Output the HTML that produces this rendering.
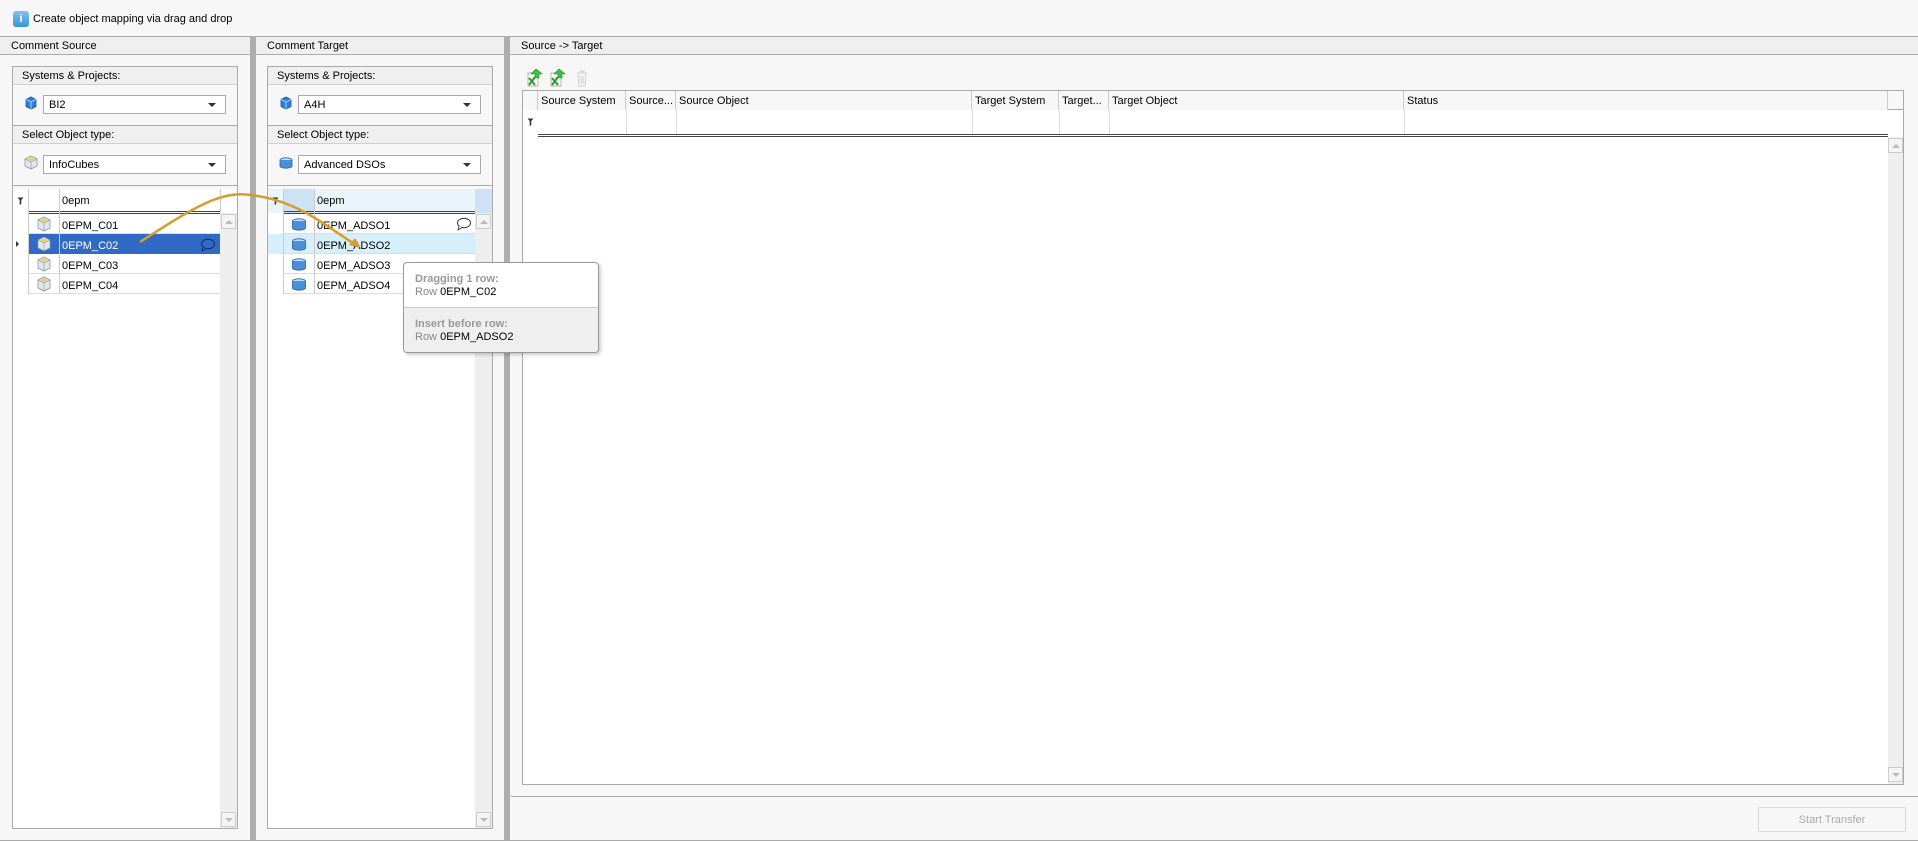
<!DOCTYPE html>
<html><head><meta charset="utf-8"><style>
*{box-sizing:border-box;margin:0;padding:0}
body{width:1918px;height:841px;background:#f7f7f7;font-family:"Liberation Sans",sans-serif;font-size:11px;color:#000;position:relative;overflow:hidden}
.a{position:absolute}
.hdr{background:#efefef;border-bottom:1px solid #aaa;height:18px;top:37px;line-height:19px;padding-left:11px}
.gut{background:#adadad;top:36px;height:805px;width:6px}
.box{border:1px solid #aaa;background:#f7f7f7}
.sub{background:#efefef;border-bottom:1px solid #d0d0d0;height:18px;line-height:19px;padding-left:9px}
.combo{background:#fff;border:1px solid #aaa;height:19px;line-height:18px;padding-left:5px}
.combo:after{content:"";position:absolute;right:9px;top:7px;border-left:4px solid transparent;border-right:4px solid transparent;border-top:4px solid #333}
.row{height:20px;line-height:20px;padding-top:2px;border-bottom:1px solid #ddd}
.sb{background:#eee}
.sbb{width:15px;height:15px;border:1px solid #ccc;background:#f4f4f4}
.up:after{content:"";position:absolute;left:3px;top:5px;border-left:4px solid transparent;border-right:4px solid transparent;border-bottom:4px solid #bbb}
.dn:after{content:"";position:absolute;left:3px;top:5px;border-left:4px solid transparent;border-right:4px solid transparent;border-top:4px solid #bbb}
.th{top:91px;height:19px;line-height:20px;border-right:1px solid #ccc;padding-left:3px;background:#f7f7f7}
</style></head><body>
<svg width="0" height="0" style="position:absolute"><defs>
<g id="fun"><path d="M0.5 0.5 H6.5 L4.3 3 V7 L2.7 8 V3Z" fill="#333"/></g>
</defs></svg>
<!-- top bar -->
<div class="a" style="left:0;top:36px;width:1918px;height:1px;background:#aaa"></div>
<div class="a" style="left:13px;top:11px;width:16px;height:16px;border-radius:3px;background:linear-gradient(#7fc2ef,#3a93d8);color:#fff;font-weight:bold;font-size:11px;text-align:center;line-height:16px">i</div>
<div class="a" style="left:33px;top:13px;font-size:11px">Create object mapping via drag and drop</div>

<!-- panel headers -->
<div class="a hdr" style="left:0;width:250px">Comment Source</div>
<div class="a hdr" style="left:256px;width:248px">Comment Target</div>
<div class="a hdr" style="left:510px;width:1408px">Source -&gt; Target</div>
<div class="a gut" style="left:250px"></div>
<div class="a gut" style="left:504px"></div>
<div class="a" style="left:0;top:840px;width:1918px;height:1px;background:#aaa"></div>

<!-- LEFT panel -->
<div class="a box" style="left:12px;top:66px;width:226px;height:763px">
 <div class="sub">Systems &amp; Projects:</div>
 <div style="height:41px;border-bottom:1px solid #aaa;position:relative">
  <svg class="a" style="left:12px;top:11px" width="12" height="14" viewBox="0 0 12 14"><path d="M6 1 L11 3.5 V10.5 L6 13 L1 10.5 V3.5Z" fill="#2f7fd6" stroke="#1a4f9a" stroke-width=".8"/><path d="M1 3.5 L6 6 L11 3.5 M6 6 V13" stroke="#9cd0ff" fill="none"/></svg>
  <div class="a combo" style="left:30px;top:10px;width:183px">BI2</div>
 </div>
 <div class="sub">Select Object type:</div>
 <div style="height:42px;border-bottom:1px solid #aaa;position:relative">
  <svg class="a" style="left:11px;top:11px" width="14" height="15" viewBox="0 0 14 15"><path d="M7 1 L13 4 V11 L7 14 L1 11 V4Z" fill="#e2e7ee" stroke="#8894a4" stroke-width=".8"/><path d="M3 4.2 L7 2.4 L11 4.2 L7 6Z" fill="#f2d04a"/><path d="M1 4 L7 7 L13 4 M7 7 V14" stroke="#8894a4" stroke-width=".6" fill="none"/></svg>
  <div class="a combo" style="left:30px;top:11px;width:183px">InfoCubes</div>
 </div>
</div>
<!-- left grid -->
<div class="a" style="left:13px;top:189px;width:224px;height:639px;background:#fff"></div>
<div class="a" style="left:28px;top:189px;width:192px;height:25px;background:#fff;border-bottom:3px double #444"></div>
<div class="a" style="left:28px;top:189px;width:1px;height:105px;background:#ccc"></div>
<div class="a" style="left:59px;top:189px;width:1px;height:105px;background:#ccc"></div>
<div class="a" style="left:62px;top:195px">0epm</div>
<svg class="a" style="left:17px;top:197px" width="8" height="9"><use href="#fun"/></svg>
<div class="a sb" style="left:220px;top:213px;width:17px;height:615px"></div>
<div class="a sbb up" style="left:221px;top:214px"></div>
<div class="a sbb dn" style="left:221px;top:812px"></div>
<div class="a" style="left:220px;top:189px;width:1px;height:24px;background:#ccc"></div>

<div class="a" style="left:28px;top:214px;width:192px">
 <div class="row" style="padding-left:34px">0EPM_C01</div>
 <div class="row" style="padding-left:34px;background:#316ac5;color:#fff;border-color:#316ac5">0EPM_C02</div>
 <div class="row" style="padding-left:34px">0EPM_C03</div>
 <div class="row" style="padding-left:34px">0EPM_C04</div>
</div>
<div class="a" style="left:28px;top:234px;width:31px;height:20px;background:#316ac5"></div>
<div class="a" style="left:59px;top:214px;width:1px;height:80px;background:#ccc"></div>
<div class="a" style="left:28px;top:214px;width:1px;height:80px;background:#ccc"></div>
<div class="a" style="left:16px;top:241px;border-top:3px solid transparent;border-bottom:3px solid transparent;border-left:3px solid #333"></div>
<svg class="a" style="left:36px;top:216px" width="16" height="80">
 <g id="cube"><path d="M8 1 L14 4 V12 L8 15 L2 12 V4Z" fill="#e2e7ee" stroke="#8894a4" stroke-width=".8"/><path d="M4 4.2 L8 2.4 L12 4.2 L8 6Z" fill="#f2d04a"/><path d="M2 4 L8 7 L14 4 M8 7 V15" stroke="#8894a4" stroke-width=".6" fill="none"/></g>
 <use href="#cube" y="20"/><use href="#cube" y="40"/><use href="#cube" y="60"/>
</svg>
<svg class="a" style="left:200px;top:238px" width="16" height="14"><ellipse cx="8" cy="6" rx="6.5" ry="4.8" fill="none" stroke="#0a2a5a"/><path d="M3 9 L2 13 L6 10.5" fill="#316ac5" stroke="#0a2a5a" stroke-width=".8"/></svg>

<!-- MIDDLE panel -->
<div class="a box" style="left:267px;top:66px;width:226px;height:763px">
 <div class="sub">Systems &amp; Projects:</div>
 <div style="height:41px;border-bottom:1px solid #aaa;position:relative">
  <svg class="a" style="left:12px;top:11px" width="12" height="14" viewBox="0 0 12 14"><path d="M6 1 L11 3.5 V10.5 L6 13 L1 10.5 V3.5Z" fill="#2f7fd6" stroke="#1a4f9a" stroke-width=".8"/><path d="M1 3.5 L6 6 L11 3.5 M6 6 V13" stroke="#9cd0ff" fill="none"/></svg>
  <div class="a combo" style="left:30px;top:10px;width:183px">A4H</div>
 </div>
 <div class="sub">Select Object type:</div>
 <div style="height:42px;border-bottom:1px solid #aaa;position:relative">
  <svg class="a" style="left:11px;top:13px" width="14" height="12"><ellipse cx="7" cy="3" rx="6" ry="2.2" fill="#bfe0ff" stroke="#2a5f9e" stroke-width=".8"/><path d="M1 3 V9 A6 2.2 0 0 0 13 9 V3" fill="#4a90d9" stroke="#2a5f9e" stroke-width=".8"/></svg>
  <div class="a combo" style="left:30px;top:11px;width:183px">Advanced DSOs</div>
 </div>
</div>
<div class="a" style="left:268px;top:189px;width:224px;height:639px;background:#fff"></div>
<div class="a" style="left:268px;top:189px;width:224px;height:24px;background:#eaf4fb"></div>
<div class="a" style="left:284px;top:189px;width:30px;height:24px;background:#cde3f5"></div>
<div class="a" style="left:475px;top:189px;width:17px;height:24px;background:#cde3f5"></div>
<div class="a" style="left:284px;top:211px;width:191px;height:3px;border-top:3px double #444"></div>
<div class="a" style="left:317px;top:195px">0epm</div>
<svg class="a" style="left:272px;top:197px" width="8" height="9"><use href="#fun"/></svg>
<div class="a sb" style="left:475px;top:213px;width:17px;height:615px"></div>
<div class="a sbb up" style="left:476px;top:214px"></div>
<div class="a sbb dn" style="left:476px;top:812px"></div>
<div class="a" style="left:268px;top:234px;width:207px;height:20px;background:#d6effa"></div>
<div class="a" style="left:283px;top:214px;width:192px">
 <div class="row" style="padding-left:34px">0EPM_ADSO1</div>
 <div class="row" style="padding-left:34px;background:#d6effa">0EPM_ADSO2</div>
 <div class="row" style="padding-left:34px">0EPM_ADSO3</div>
 <div class="row" style="padding-left:34px">0EPM_ADSO4</div>
</div>
<div class="a" style="left:283px;top:189px;width:1px;height:105px;background:#ccc"></div>
<div class="a" style="left:314px;top:189px;width:1px;height:105px;background:#ccc"></div>
<svg class="a" style="left:291px;top:218px" width="16" height="80">
 <g id="ds"><ellipse cx="8" cy="3" rx="6.5" ry="2.2" fill="#bfe0ff" stroke="#2a5f9e" stroke-width=".8"/><path d="M1.5 3 V10 A6.5 2.2 0 0 0 14.5 10 V3" fill="#4a90d9" stroke="#2a5f9e" stroke-width=".8"/></g>
 <use href="#ds" y="20"/><use href="#ds" y="40"/><use href="#ds" y="60"/>
</svg>
<svg class="a" style="left:456px;top:217px" width="16" height="14"><ellipse cx="8" cy="6" rx="6.5" ry="4.8" fill="#fff" stroke="#333"/><path d="M3 9 L2 13 L6 10.5" fill="#fff" stroke="#333" stroke-width=".8"/></svg>

<!-- RIGHT panel -->
<svg class="a" style="left:526px;top:68px" width="64" height="20">
 <g><path d="M2 5 H12 V18 H2Z" fill="#fff" stroke="#999" stroke-width=".7"/><path d="M3 17 L9 9 M3 10 L9 17" stroke="#2a9a2a" stroke-width="2"/><path d="M9 1 L15 6 H12 V10 H8 V6 H4Z" transform="translate(1,0)" fill="#3ec43e" stroke="#1d8a1d" stroke-width=".6"/></g>
 <g transform="translate(23,0)"><path d="M2 5 H12 V18 H2Z" fill="#fff" stroke="#999" stroke-width=".7"/><path d="M3 17 L9 9 M3 10 L9 17" stroke="#2a9a2a" stroke-width="2"/><path d="M9 1 L15 6 H12 V10 H8 V6 H4Z" transform="translate(1,0)" fill="#3ec43e" stroke="#1d8a1d" stroke-width=".6"/></g>
 <g transform="translate(48,0)" stroke="#ccc" fill="none"><path d="M3 5 H13 M6 5 V3 H10 V5 M4 6 L5 18 H11 L12 6 M7 8 V16 M9 8 V16"/></g>
</svg>
<div class="a" style="left:522px;top:90px;width:1382px;height:695px;background:#fff;border:1px solid #aaa"></div>
<div class="a" style="left:523px;top:91px;width:1380px;height:19px;background:#f7f7f7;border-bottom:1px solid #aaa"></div>
<div class="a th" style="left:523px;width:15px"></div>
<div class="a th" style="left:538px;width:88px">Source System</div>
<div class="a th" style="left:626px;width:50px">Source...</div>
<div class="a th" style="left:676px;width:296px">Source Object</div>
<div class="a th" style="left:972px;width:87px">Target System</div>
<div class="a th" style="left:1059px;width:50px">Target...</div>
<div class="a th" style="left:1109px;width:295px">Target Object</div>
<div class="a th" style="left:1404px;width:484px">Status</div>
<div class="a" style="left:538px;top:110px;width:1350px;height:27px;border-bottom:3px double #444"></div>
<div class="a" style="left:626px;top:110px;width:1px;height:24px;background:#ddd"></div>
<div class="a" style="left:676px;top:110px;width:1px;height:24px;background:#ddd"></div>
<div class="a" style="left:972px;top:110px;width:1px;height:24px;background:#ddd"></div>
<div class="a" style="left:1059px;top:110px;width:1px;height:24px;background:#ddd"></div>
<div class="a" style="left:1109px;top:110px;width:1px;height:24px;background:#ddd"></div>
<div class="a" style="left:1404px;top:110px;width:1px;height:24px;background:#ddd"></div>
<svg class="a" style="left:527px;top:118px" width="8" height="9"><use href="#fun"/></svg>
<div class="a sb" style="left:1888px;top:137px;width:15px;height:647px"></div>
<div class="a sbb up" style="left:1888px;top:138px"></div>
<div class="a sbb dn" style="left:1888px;top:767px"></div>
<div class="a" style="left:511px;top:796px;width:1407px;height:1px;background:#aaa"></div>
<div class="a" style="left:1758px;top:807px;width:148px;height:25px;border:1px solid #ddd;color:#aaa;text-align:center;line-height:24px">Start Transfer</div>

<!-- tooltip -->
<div class="a" style="left:403px;top:262px;width:196px;height:91px;border:1px solid #999;border-radius:4px;background:#fff;box-shadow:2px 2px 3px rgba(0,0,0,.2);overflow:hidden">
 <div style="height:44px;padding:10px 0 0 11px;line-height:13px"><b style="color:#999">Dragging 1 row:</b><br><span style="color:#888">Row</span> 0EPM_C02</div>
 <div style="height:47px;background:#efefef;border-top:1px solid #ccc;padding:10px 0 0 11px;line-height:13px"><b style="color:#999">Insert before row:</b><br><span style="color:#888">Row</span> 0EPM_ADSO2</div>
</div>

<!-- drag arrow -->
<svg class="a" style="left:0;top:0" width="600" height="300">
 <path d="M140 242 C190 210 220 190 250 195 C300 200 330 230 358 246" stroke="#d79c2e" stroke-width="2.5" fill="none"/>
 <path d="M361 248 L349 245 L355 238Z" fill="#d79c2e"/>
</svg>
</body></html>
